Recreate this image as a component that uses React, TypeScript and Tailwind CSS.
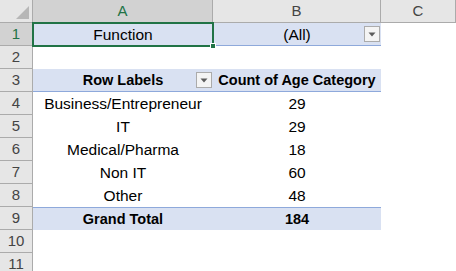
import React from 'react';

type Cell = {
  text?: string;
  bold?: boolean;
  fill?: boolean;
  filter?: boolean;
  topLine?: boolean;
  bottomLine?: boolean;
};

const rows: { a: Cell; b: Cell }[] = [
  { a: { text: 'Function', fill: true }, b: { text: '(All)', fill: true, filter: true, bottomLine: true } },
  { a: {}, b: {} },
  {
    a: { text: 'Row Labels', bold: true, fill: true, filter: true, bottomLine: true },
    b: { text: 'Count of Age Category', bold: true, fill: true, bottomLine: true },
  },
  { a: { text: 'Business/Entrepreneur' }, b: { text: '29' } },
  { a: { text: 'IT' }, b: { text: '29' } },
  { a: { text: 'Medical/Pharma' }, b: { text: '18' } },
  { a: { text: 'Non IT' }, b: { text: '60' } },
  { a: { text: 'Other' }, b: { text: '48' } },
  {
    a: { text: 'Grand Total', bold: true, fill: true, topLine: true },
    b: { text: '184', bold: true, fill: true, topLine: true },
  },
  { a: {}, b: {} },
  { a: {}, b: {} },
];

function FilterButton() {
  return (
    <span className="absolute right-[1px] top-1/2 -translate-y-1/2 flex h-[16px] w-[16px] items-center justify-center border border-[#ababab] bg-[#f4f4f4]">
      <svg width="8" height="5" viewBox="0 0 8 5">
        <path d="M0.5 0.5 L7.5 0.5 L4 4.5 Z" fill="#5c5c5c" />
      </svg>
    </span>
  );
}

function SheetCell({ cell, width }: { cell: Cell; width: string }) {
  return (
    <div
      className={`relative flex h-[23px] shrink-0 items-center justify-center ${width} ${
        cell.fill ? 'bg-[#d9e1f2]' : 'bg-white'
      } ${cell.topLine ? 'border-t border-[#8ea9db]' : ''} ${cell.bottomLine ? 'border-b border-[#8ea9db]' : ''}`}
    >
      {cell.text && (
        <span
          className={`pt-[1px] leading-none text-black ${cell.bold ? 'text-[14.5px] font-bold' : 'text-[15.5px]'}`}
        >
          {cell.text}
        </span>
      )}
      {cell.filter && <FilterButton />}
    </div>
  );
}

export default function App() {
  return (
    <div
      className="relative h-[271px] w-[456px] overflow-hidden bg-white"
      style={{ fontFamily: '"Liberation Sans", Arial, sans-serif' }}
    >
      {/* column headers */}
      <div className="flex h-[23px] border-b border-[#ababab] bg-[#e6e6e6] text-[15px] text-[#444]">
        <div className="relative w-[33px] shrink-0 border-r border-[#ababab]">
          <svg className="absolute bottom-[3px] right-[3px]" width="13" height="13" viewBox="0 0 13 13">
            <path d="M13 0 L13 13 L0 13 Z" fill="#b7b7b7" />
          </svg>
        </div>
        <div className="flex w-[180px] shrink-0 items-center justify-center border-r border-[#ababab] bg-[#d2d2d2] text-[#217346]">
          A
        </div>
        <div className="flex w-[168px] shrink-0 items-center justify-center border-r border-[#ababab]">B</div>
        <div className="flex w-[75px] shrink-0 items-center justify-center border-r border-[#ababab]">C</div>
      </div>

      {rows.map((r, i) => (
        <div key={i} className="flex">
          <div
            className={`flex h-[23px] w-[33px] shrink-0 items-center justify-center border-b border-r border-[#ababab] text-[15px] ${
              i === 0 ? 'bg-[#d2d2d2] text-[#217346]' : 'bg-[#e6e6e6] text-[#444]'
            }`}
          >
            {i + 1}
          </div>
          <SheetCell cell={r.a} width="w-[180px]" />
          <SheetCell cell={r.b} width="w-[168px]" />
        </div>
      ))}

      {/* active cell A1 */}
      <div className="pointer-events-none absolute left-[32px] top-[22px] h-[25px] w-[182px] border-2 border-[#217346]">
        <span className="absolute -bottom-[4px] -right-[4px] h-[6px] w-[6px] border border-white bg-[#217346]" />
      </div>
    </div>
  );
}
